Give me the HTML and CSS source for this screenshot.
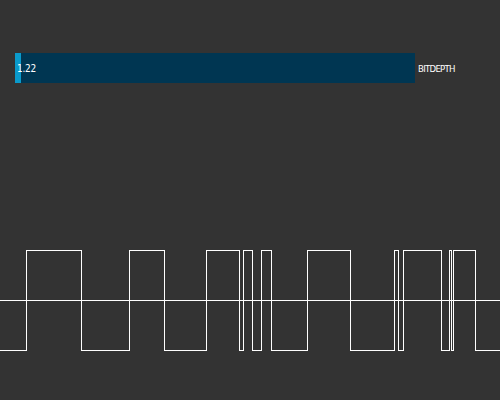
FILE: index.html
```html
<!DOCTYPE html>
<html>
<head>
<meta charset="utf-8">
<link rel="stylesheet" href="styles.css">
</head>
<body>
<div class="page">
  <div class="slider-row">
    <div class="slider">
      <div class="handle"></div>
      <span class="value">1.22</span>
    </div>
    <span class="label">BITDEPTH</span>
  </div>
  <svg class="wave" width="500" height="120" viewBox="0 240 500 120" shape-rendering="crispEdges">
    <line x1="0" y1="300.5" x2="500" y2="300.5" stroke="#ffffff" stroke-width="1"/>
    <path fill="none" stroke="#ffffff" stroke-width="1" d="M0,350.5 H26.5 V250.5 H81.5 V350.5 H129.5 V250.5 H164.5 V350.5 H206.5 V250.5 H239.5 V350.5 H243.5 V250.5 H252.5 V350.5 H261.5 V250.5 H271.5 V350.5 H307.5 V250.5 H350.5 V350.5 H394.5 V250.5 H398.5 V350.5 H403.5 V250.5 H441.5 V350.5 H449.5 V250.5 H451.5 V350.5 H453.5 V250.5 H475.5 V350.5 H500"/>
  </svg>
</div>
</body>
</html>
```
FILE: styles.css
```css
html, body {
  margin: 0;
  padding: 0;
  background: #333333;
}
.page {
  width: 500px;
  height: 400px;
  display: flex;
  flex-direction: column;
}
.slider-row {
  margin-top: 53px;
  margin-left: 15px;
  display: flex;
  align-items: center;
  height: 30px;
}
.slider {
  width: 400px;
  height: 30px;
  background: #003652;
  display: flex;
  align-items: center;
  position: relative;
}
.handle {
  width: 6px;
  height: 30px;
  background: #0a9acb;
}
.value {
  position: absolute;
  left: 2px;
  top: 0;
  line-height: 31px;
  font-family: "DejaVu Sans Condensed", "DejaVu Sans", sans-serif;
  font-stretch: condensed;
  font-size: 10px;
  letter-spacing: -0.3px;
  color: #ffffff;
}
.label {
  margin-left: 3px;
  line-height: 31px;
  font-family: "DejaVu Sans Condensed", "DejaVu Sans", sans-serif;
  font-stretch: condensed;
  font-size: 9.5px;
  letter-spacing: -0.7px;
  color: #ffffff;
}
.wave {
  display: block;
  margin-top: 157px;
}
```
